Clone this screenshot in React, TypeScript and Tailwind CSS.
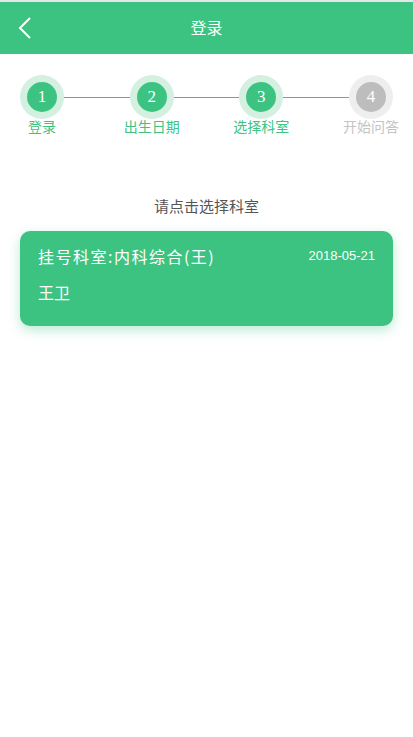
import React from "react";

const steps = [
  { n: 1, label: "登录", done: true },
  { n: 2, label: "出生日期", done: true },
  { n: 3, label: "选择科室", done: true },
  { n: 4, label: "开始问答", done: false },
];

function Step({ n, label, done }: { n: number; label: string; done: boolean }) {
  return (
    <div className="relative flex w-[44px] shrink-0 flex-col items-center">
      <div
        className={`flex h-[44px] w-[44px] items-center justify-center rounded-full ${
          done ? "bg-[#d3f0e1]" : "bg-[#eeeeee]"
        }`}
      >
        <div
          className={`flex h-[30px] w-[30px] items-center justify-center rounded-full text-[17px] text-white ${
            done ? "bg-[#3dc381]" : "bg-[#bdbdbd]"
          }`}
          style={{ fontFamily: '"Liberation Serif", serif' }}
        >
          {n}
        </div>
      </div>
      <div
        className={`-mt-[3px] whitespace-nowrap text-[14px] leading-[20px] ${
          done ? "text-[#3dc381]" : "text-[#c4c4c4]"
        }`}
      >
        {label}
      </div>
    </div>
  );
}

export default function App() {
  return (
    <div
      className="min-h-[737px] w-full bg-white"
      style={{ fontFamily: '"Noto Sans CJK SC", "Liberation Sans", sans-serif' }}
    >
      <div className="h-[2px] bg-[#e6e6e6]" />
      <div className="relative flex h-[52px] items-center justify-center bg-[#3dc381]">
        <svg
          className="absolute left-[17px] top-[14px]"
          width="16"
          height="24"
          viewBox="0 0 16 24"
          fill="none"
          stroke="white"
          strokeWidth="2"
        >
          <path d="M13 2 L3 12 L13 22" />
        </svg>
        <span className="-mt-[3px] text-[16px] text-white">登录</span>
      </div>

      <div className="flex items-start px-5 pt-[21px]">
        {steps.map((s, i) => (
          <React.Fragment key={s.n}>
            <Step {...s} />
            {i < steps.length - 1 && <div className="mt-[22px] h-px flex-1 bg-[#52b68a]" />}
          </React.Fragment>
        ))}
      </div>

      <div className="mt-[60px] text-center text-[15px] leading-[20px] text-[#555555]">请点击选择科室</div>

      <div className="mx-5 mt-[15px] h-[95px] rounded-[10px] bg-[#3dc381] px-[18px] pt-[14px] text-white shadow-[0_4px_12px_rgba(61,195,129,0.35)]">
        <div className="flex items-center justify-between">
          <span className="text-[16px] leading-[22px] tracking-[1.5px]">挂号科室:内科综合(王)</span>
          <span
            className="text-[13px] leading-[22px]"
            style={{ fontFamily: '"Liberation Sans", sans-serif' }}
          >
            2018-05-21
          </span>
        </div>
        <div className="mt-[14px] text-[16px] leading-[22px]">王卫</div>
      </div>
    </div>
  );
}
